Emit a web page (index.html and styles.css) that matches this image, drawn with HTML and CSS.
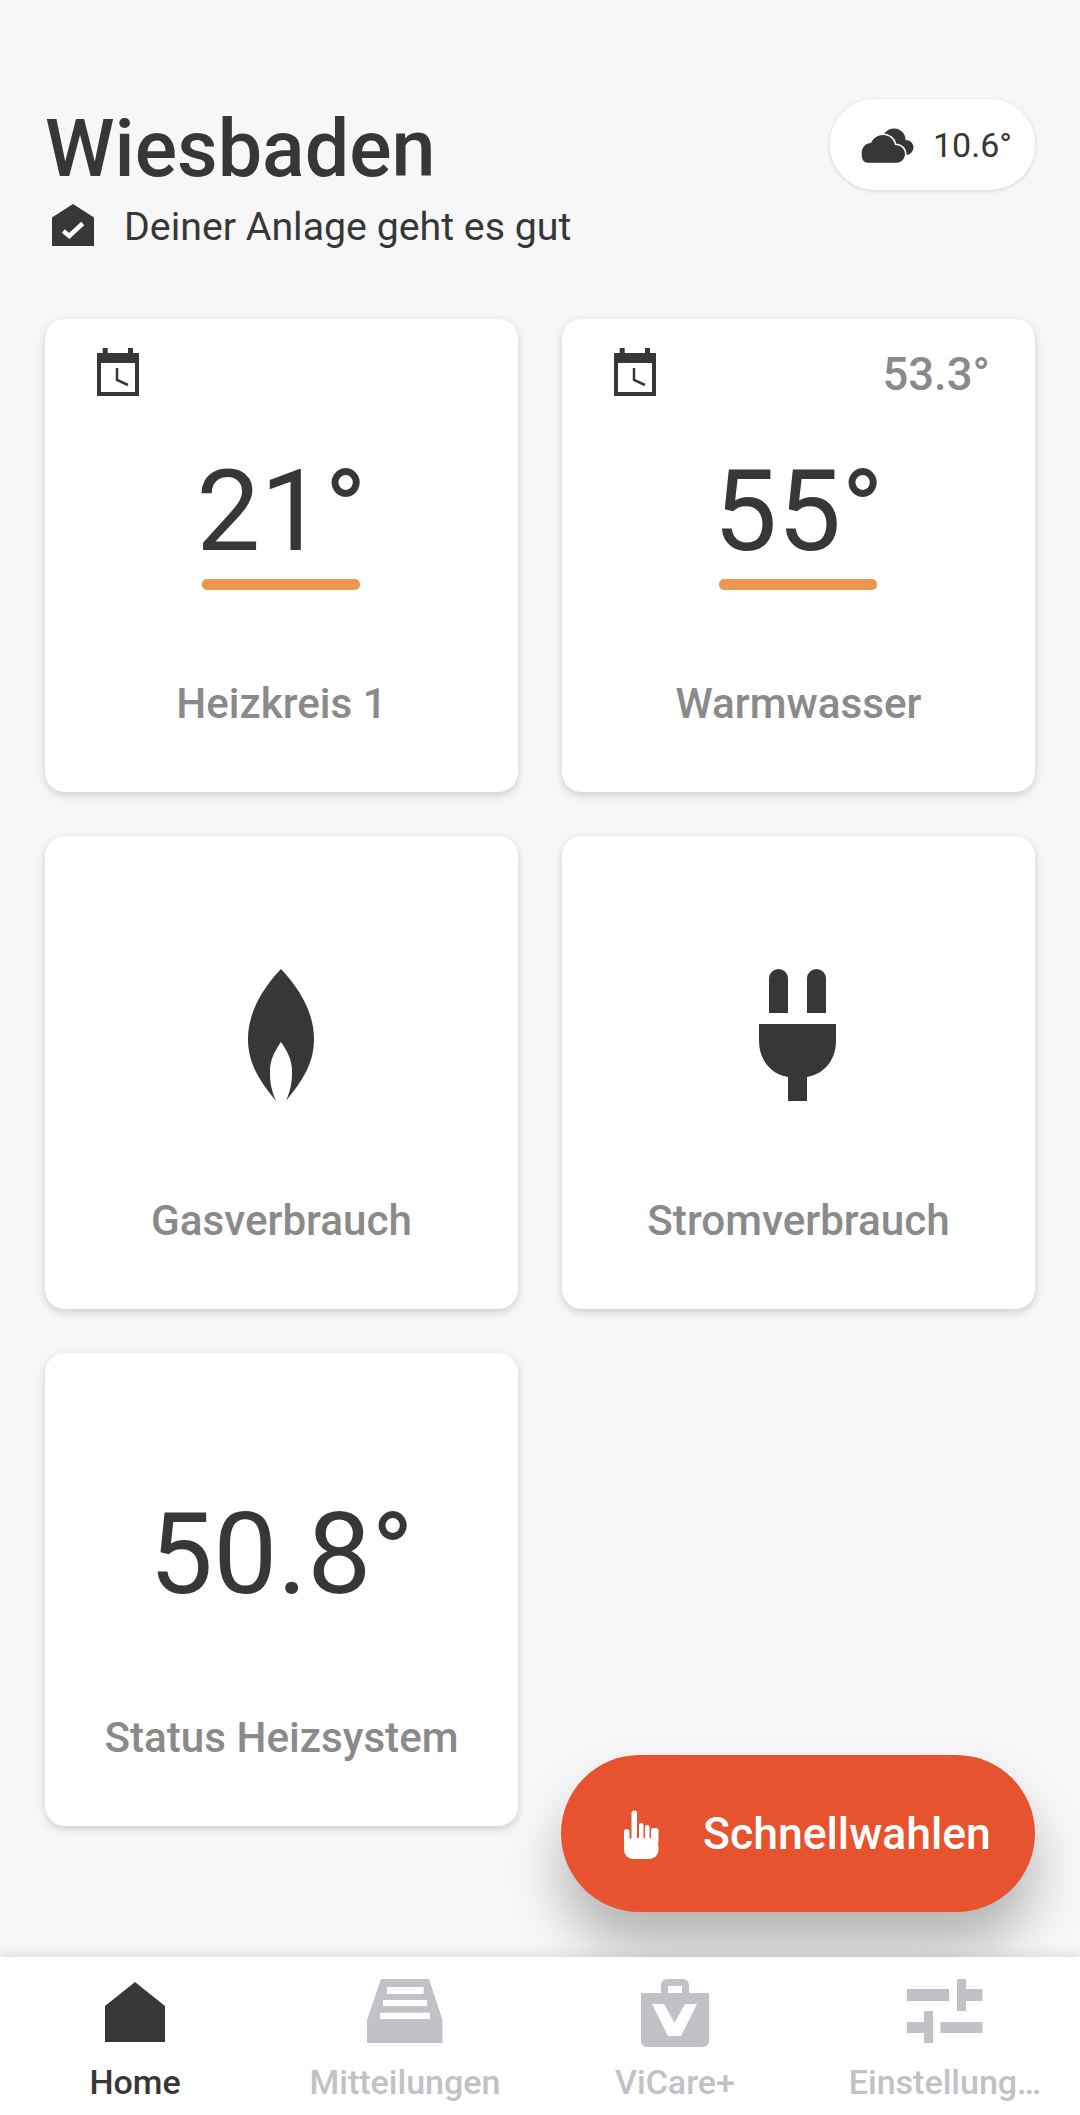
FILE: index.html
```html
<!DOCTYPE html>
<html>

<head>
  <meta charset="UTF-8">
  <title>Wiesbaden</title>
  <link rel="stylesheet" href="styles.css">
</head>

<body>
  <main class="home">
    <header class="head">
      <div class="head-left">
        <h1 class="title">Wiesbaden</h1>
        <p class="status">
          <svg class="status-icon" viewBox="0 0 42 42">
            <path d="M21 0L42 13.5V42H0V13.5Z" fill="#373737" />
            <path d="M11.3 27L17.3 32L30.7 19.5" fill="none" stroke="#fff" stroke-width="4.5" />
          </svg>
          Deiner Anlage geht es gut
        </p>
      </div>
      <div class="weather">
        <svg class="weather-icon" viewBox="0 0 80 50">
          <circle cx="44" cy="20" r="11.5" fill="#373737" />
          <circle cx="56" cy="27.5" r="7.5" fill="#373737" />
          <path d="M18 42.7C12 42.7 11.7 37 11.7 33C11.7 27 16 23 21 23C23 18 28 15 33 15C39 15 44 19 45 25C51 25 55 29 55 34C55 39 51 42.7 47 42.7Z" fill="#373737" stroke="#fff" stroke-width="3" paint-order="stroke" />
        </svg>
        <span>10.6°</span>
      </div>
    </header>

    <section class="tiles">
      <div class="tile">
        <div class="tile-top">
          <svg class="calendar" viewBox="0 0 42 48">
            <path d="M0 5H5.7V0H10.7V5H31V0H36V5H42V48H0ZM4 15V44H38V15Z" fill="#373737" />
            <path d="M20 20V32L31 37" fill="none" stroke="#373737" stroke-width="2.5" />
          </svg>
        </div>
        <div class="tile-main">
          <div class="temp">21°</div>
          <div class="temp-bar"></div>
        </div>
        <div class="tile-label">Heizkreis 1</div>
      </div>

      <div class="tile">
        <div class="tile-top">
          <svg class="calendar" viewBox="0 0 42 48">
            <path d="M0 5H5.7V0H10.7V5H31V0H36V5H42V48H0ZM4 15V44H38V15Z" fill="#373737" />
            <path d="M20 20V32L31 37" fill="none" stroke="#373737" stroke-width="2.5" />
          </svg>
          <span class="tile-current">53.3°</span>
        </div>
        <div class="tile-main">
          <div class="temp">55°</div>
          <div class="temp-bar"></div>
        </div>
        <div class="tile-label">Warmwasser</div>
      </div>

      <div class="tile">
        <div class="tile-top"></div>
        <div class="tile-main">
          <svg class="flame" viewBox="0 0 66 132">
            <path d="M33 0C52 20 66 44 66 70C66 95 54 112 38 132C44 118 44 110 44 102C44 90 39 82 33 73C27 82 22 90 22 102C22 110 22 118 28 132C12 112 0 95 0 70C0 44 14 20 33 0Z" fill="#373737" />
          </svg>
        </div>
        <div class="tile-label">Gasverbrauch</div>
      </div>

      <div class="tile">
        <div class="tile-top"></div>
        <div class="tile-main">
          <svg class="plug" viewBox="0 0 77 132">
            <path d="M10 44V9.5A9.5 9.5 0 0 1 29 9.5V44ZM48 44V9.5A9.5 9.5 0 0 1 67 9.5V44ZM0 55H77V72C77 90 66 105 48 108V132H29V108C11 105 0 90 0 72Z" fill="#373737" />
          </svg>
        </div>
        <div class="tile-label">Stromverbrauch</div>
      </div>

      <div class="tile">
        <div class="tile-top"></div>
        <div class="tile-main">
          <div class="temp">50.8°</div>
        </div>
        <div class="tile-label">Status Heizsystem</div>
      </div>
    </section>

    <button class="fab">
      <svg class="fab-icon" viewBox="0 0 60 70">
        <g fill="#fff">
          <rect x="20.5" y="11.5" width="5.5" height="32" rx="2.7" />
          <rect x="28" y="24" width="4.5" height="20" rx="2.2" />
          <rect x="34" y="26" width="4.5" height="18" rx="2.2" />
          <rect x="40" y="29" width="7.5" height="16" rx="2.5" />
          <rect x="13" y="30" width="5.5" height="16" rx="2.7" />
          <rect x="13" y="39" width="34.5" height="21" rx="9" />
        </g>
      </svg>
      Schnellwahlen
    </button>
  </main>

  <nav class="tabs">
    <div class="tab tab-active">
      <svg class="tab-icon" viewBox="0 0 80 68">
        <path d="M40 3L70 27V63H10V27Z" fill="currentColor" />
      </svg>
      <span>Home</span>
    </div>
    <div class="tab">
      <svg class="tab-icon" viewBox="0 0 80 68">
        <path fill-rule="evenodd" d="M16 0H64L77.5 41V64H2V41ZM22 8V15H58.6V8ZM18 21V27H62V21ZM15 33.7V40H65V33.7Z" fill="currentColor" />
      </svg>
      <span>Mitteilungen</span>
    </div>
    <div class="tab">
      <svg class="tab-icon" viewBox="0 0 80 68">
        <path fill-rule="evenodd" d="M26 14V6A6 6 0 0 1 32 0H48A6 6 0 0 1 54 6V14H74V62A6 6 0 0 1 68 68H12A6 6 0 0 1 6 62V14ZM33 7V14H47V7ZM17 25L33 57H46L62 25H50L39.5 44L29 25Z" fill="currentColor" />
      </svg>
      <span>ViCare+</span>
    </div>
    <div class="tab">
      <svg class="tab-icon" viewBox="0 0 80 68">
        <path d="M2 10H44V22H2ZM52 0H61V10H77.5V22H61V32H52ZM2 43H19V32H28V64H19V54H2ZM35.5 43H77.5V54H35.5Z" fill="currentColor" />
      </svg>
      <span>Einstellung…</span>
    </div>
  </nav>
</body>

</html>
```

FILE: styles.css
```css
* {
  box-sizing: border-box;
}

body {
  margin: 0;
  height: 2115px;
  display: flex;
  flex-direction: column;
  background-color: #f7f7f7;
  color: #373737;
  font-family: Roboto, sans-serif;
  overflow: hidden;
}

.home {
  flex: 1;
  position: relative;
  padding: 99px 45px 0;
}

.head {
  display: flex;
  justify-content: space-between;
  align-items: flex-start;
  margin-bottom: 73px;
}

.title {
  margin: 3px 0 0;
  font-size: 79px;
  line-height: 94px;
  font-weight: 500;
}

.status {
  display: flex;
  align-items: center;
  margin: 8px 0 0;
  height: 42px;
  padding-top: 4px;
  font-size: 39.3px;
  gap: 30px;
}

.status-icon {
  width: 42px;
  height: 42px;
  margin-left: 7px;
  margin-top: -4px;
}

.weather {
  width: 205px;
  height: 91px;
  display: flex;
  align-items: center;
  gap: 3px;
  padding-left: 20px;
  background-color: #fff;
  border-radius: 45px;
  font-size: 34px;
  box-shadow: 0 1px 4px rgba(0, 0, 0, 0.14);
}

.weather-icon {
  width: 80px;
  height: 50px;
}

.tiles {
  display: grid;
  grid-template-columns: 473px 473px;
  grid-auto-rows: 473px;
  gap: 44px;
}

.tile {
  display: flex;
  flex-direction: column;
  padding-top: 29px;
  background-color: #fff;
  border-radius: 20px;
  box-shadow: 0 3px 8px rgba(0, 0, 0, 0.17);
}

.tile-top {
  display: flex;
  justify-content: space-between;
  align-items: center;
  height: 48px;
  padding: 0 45px 0 52px;
}

.calendar {
  width: 42px;
  height: 48px;
}

.tile-current {
  margin-top: 5px;
  color: #8a8a8a;
  font-size: 45.5px;
  font-weight: 500;
}

.tile-main {
  display: flex;
  flex-direction: column;
  align-items: center;
  justify-content: center;
  height: 160px;
  margin-top: 42px;
}

.temp {
  margin-top: 4px;
  font-size: 114px;
  line-height: 120px;
}

.temp-bar {
  width: 158px;
  height: 11px;
  margin: 8px 1px 0 0;
  border-radius: 5px;
  background-color: #ec9651;
}

.flame {
  width: 66px;
  height: 132px;
  margin-right: 2px;
}

.plug {
  width: 77px;
  height: 132px;
  margin-right: 2px;
}

.tile-label {
  margin-top: 81px;
  color: #8a8a8a;
  font-size: 42.2px;
  line-height: 50px;
  font-weight: 500;
  text-align: center;
}

.fab {
  position: absolute;
  right: 45px;
  bottom: 45px;
  width: 474px;
  height: 157px;
  display: flex;
  align-items: center;
  gap: 32px;
  padding: 0 0 0 50px;
  border: none;
  border-radius: 79px;
  background-color: #e8532f;
  color: #fff;
  font-family: inherit;
  font-size: 44.5px;
  font-weight: 500;
  box-shadow: 0 36px 54px rgba(0, 0, 0, 0.27);
}

.fab-icon {
  width: 60px;
  height: 70px;
}

.tabs {
  position: relative;
  display: flex;
  height: 158px;
  padding-top: 22px;
  background-color: #fff;
  box-shadow: 0 -3px 12px rgba(0, 0, 0, 0.1);
}

.tab {
  flex: 1;
  display: flex;
  flex-direction: column;
  align-items: center;
  color: #c1c2c7;
  font-size: 34px;
  font-weight: 500;
  line-height: 38px;
}

.tab-active {
  color: #373737;
}

.tab-icon {
  width: 80px;
  height: 68px;
  margin-bottom: 16px;
}
```
